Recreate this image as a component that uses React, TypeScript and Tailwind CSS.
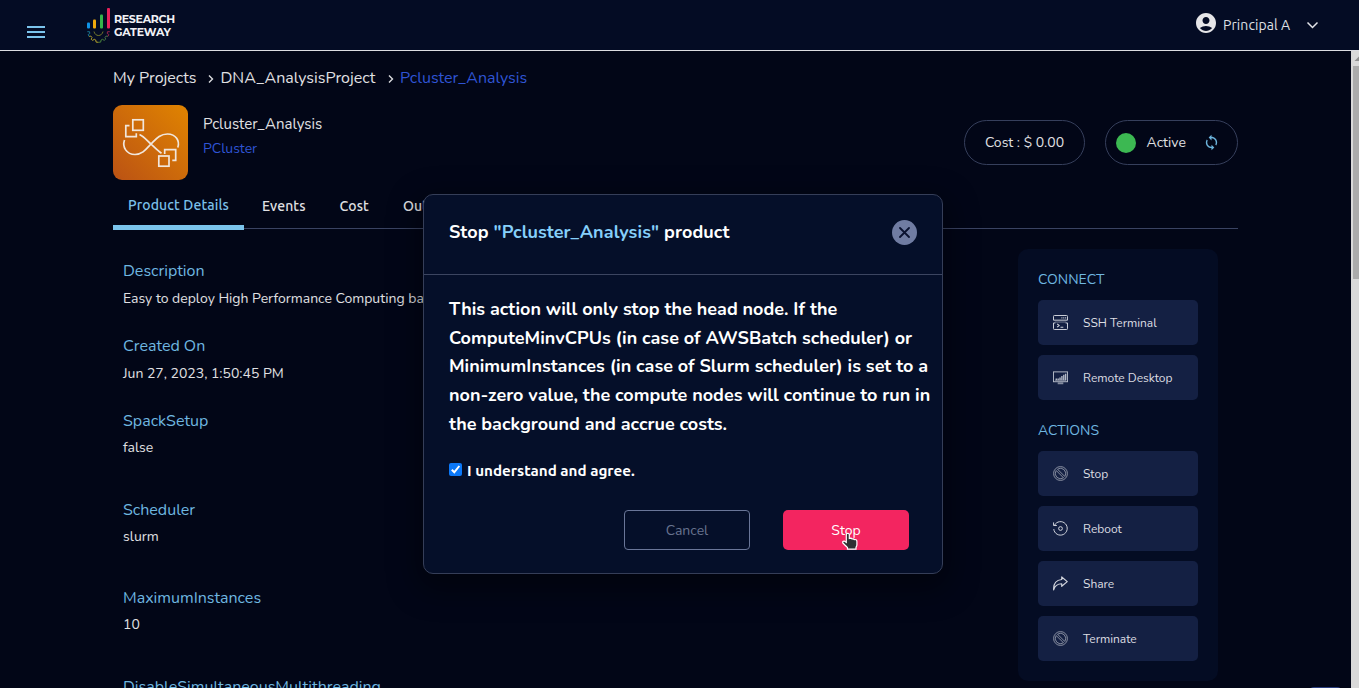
import React from 'react';
import { MdAccountCircle, MdSync } from 'react-icons/md';

const NUNITO = "font-['Nunito','Lato',sans-serif]";
const UBUNTU = "font-['Ubuntu','Noto_Sans',sans-serif]";

function Logo() {
  return (
    <div className="flex items-center">
      <svg width="26" height="36" viewBox="0 0 26 36" className="shrink-0" fill="none">
        <rect x="1" y="14.4" width="3" height="6" rx="1" fill="#0f94e8" />
        <rect x="7" y="11.6" width="3" height="8.8" rx="1" fill="#f0a90c" />
        <rect x="14" y="6.6" width="3" height="13.8" rx="1" fill="#35b44a" />
        <rect x="21" y="0" width="3" height="20.4" rx="1" fill="#e8205a" />
        <path d="M8 23.5c.6 2.600 2.400 4 4.500 4s3.900-1.400 4.500-4" stroke="#8b8f2c" strokeWidth=".8" />
        <path d="M1.300 23.700h2.200l.3 1.800-1.600 1 .8 1.900" stroke="#1c7f9c" strokeWidth=".9" />
        <path d="M3 28.400l2-.3 1 1.300-.8 1.900 1.500 1.100" stroke="#a99a2a" strokeWidth=".9" />
        <path d="M6.700 32.400l1.600-1.100 1.500.8.3 2 2.400.2" stroke="#c9b32c" strokeWidth=".9" />
        <path d="M12.500 34.300l2.200-.2.3-2 1.500-.8 1.700 1.100" stroke="#4e8d3c" strokeWidth=".9" />
        <path d="M18.200 32.400l1.500-1.200-.7-1.800 1-1.300 2 .2" stroke="#4f7a4a" strokeWidth=".9" />
        <path d="M22 28.300l.8-1.800-1.600-1.100.3-1.700h2.300" stroke="#a8254f" strokeWidth=".9" />
      </svg>
      <div className="ml-0.5 text-[11px] leading-[13px] font-bold text-[#f0f1f5] font-['Montserrat','Lato',sans-serif]">
        <div className="tracking-[-0.3px]">RESEARCH</div>
        <div className="tracking-[-0.2px]">GATEWAY</div>
      </div>
    </div>
  );
}

function Header() {
  return (
    <header className="flex h-[51px] shrink-0 justify-between border-b border-[#dcdde2] bg-[#040c24]">
      <div className="flex pl-[27px]">
        <button className="mt-[26px] flex h-3 w-[18px] flex-col justify-between" aria-label="Menu">
          <span className="h-0.5 w-full bg-[#7bc4ec]" />
          <span className="h-0.5 w-full bg-[#7bc4ec]" />
          <span className="h-0.5 w-full bg-[#7bc4ec]" />
        </button>
        <div className="mt-2 ml-[41px] h-9">
          <Logo />
        </div>
      </div>
      <div className="flex h-[46px] items-center pr-10">
        <MdAccountCircle className="size-6 text-[#e6e6e8]" />
        <span className={`ml-[5px] mt-1 w-[67px] whitespace-nowrap text-[14px] tracking-[0.08px] text-[#dfe0e4] ${UBUNTU}`}>
          Principal A
        </span>
        <svg width="13" height="9" viewBox="0 0 13 9" className="ml-4 mt-[5px]" fill="none">
          <path d="M1.500 1.500l5 5 5-5" stroke="#e3e4e8" strokeWidth="1.500" />
        </svg>
      </div>
    </header>
  );
}

function Crumb({ className }: { className: string }) {
  return (
    <svg width="6" height="9" viewBox="0 0 6 9" className={className} fill="none">
      <path d="M1 .5l3.500 3.500L1 7.500" stroke="#dcdde0" strokeWidth="1.400" />
    </svg>
  );
}

function ProductIcon() {
  return (
    <svg width="75" height="75" viewBox="0 0 75 75" className="shrink-0 rounded-[9px]" fill="none">
      <defs>
        <linearGradient id="tile" x1="0" y1="75" x2="75" y2="0" gradientUnits="userSpaceOnUse">
          <stop stopColor="#bb5214" />
          <stop offset="1" stopColor="#e08400" />
        </linearGradient>
      </defs>
      <rect width="75" height="75" fill="url(#tile)" />
      <g stroke="#f1e6dc" strokeWidth="1.700">
        <rect x="19.800" y="14.800" width="10.500" height="10.500" />
        <path d="M16.500 20.700h-3.700v11h10.500v-3.400" />
        <path d="M11.500 35C9 42 13.500 49.500 22 49.500c8 0 12-6.500 16-10.500 5-5 9-10 16.500-10 8.500 0 12.500 7 10.300 13.500" />
        <path d="M26.500 29.500C31 31.500 34 35.500 38 39c3.500 3.300 6.500 6.500 10.500 9.300" />
        <rect x="45.800" y="51" width="10.200" height="10.200" />
        <path d="M51.700 49v-4.300h11v10.600h-3.400" />
      </g>
    </svg>
  );
}

const fields = [
  { label: 'Description', value: 'Easy to deploy High Performance Computing based', box: 'h-[75px]', gap: 'mt-[3px]' },
  { label: 'Created On', value: 'Jun 27, 2023, 1:50:45 PM', box: 'h-[75px]', gap: 'mt-[3px]' },
  { label: 'SpackSetup', value: 'false', box: 'h-[89px]', gap: 'mt-[2px]' },
  { label: 'Scheduler', value: 'slurm', box: 'h-[88px]', gap: 'mt-[2px]' },
  { label: 'MaximumInstances', value: '10', box: 'h-[89px]', gap: 'mt-[2px]' },
];

const iconProps = { width: 15, height: 15, viewBox: '0 0 16 16', fill: 'none', stroke: '#d3d6de', strokeWidth: 1.05, className: 'shrink-0' };

const TerminalIcon = () => (
  <svg {...iconProps}>
    <path d="M.5 5.500v-4a1 1 0 0 1 1-1h13a1 1 0 0 1 1 1v4z" />
    <path d="M9 3h1M11 3h1M13 3h1" strokeWidth="1.200" />
    <path d="M2 7.500h12" opacity=".5" />
    <path d="M.5 8.500v6a1 1 0 0 0 1 1h13a1 1 0 0 0 1-1v-6M.5 8.500h2M13.500 8.500h2" />
    <path d="M4.500 9.500l2 1.700-2 1.700M8 13h3" strokeWidth="1.200" />
  </svg>
);
const DesktopIcon = () => (
  <svg {...iconProps} stroke="#b4b9c6">
    <rect x=".5" y="2" width="15" height="10.500" />
    <path d="M3.500 9v2M5.500 9v2M7.500 8v3M9.500 6.500V11M11.500 5v6M13.500 4v7" strokeWidth="1.500" />
    <path d="M2 11h12" opacity=".6" />
    <path d="M5 14.200h6" strokeWidth="2" opacity=".7" />
  </svg>
);
const BanIcon = () => (
  <svg {...iconProps} stroke="#9399aa" strokeWidth=".95">
    <circle cx="8" cy="8" r="7.400" />
    <path d="M4.800 3.400a5.600 5.600 0 0 1 7.800 7.800zM3.400 4.800a5.600 5.600 0 0 0 7.800 7.800z" />
  </svg>
);
const RebootIcon = () => (
  <svg {...iconProps}>
    <path d="M1.600 4.500A7.200 7.200 0 1 1 .8 8.600" />
    <path d="M.6 1.500v3.300h3.500" />
    <circle cx="8" cy="8" r="2" />
  </svg>
);
const ShareIcon = () => (
  <svg {...iconProps} strokeWidth={1.25} strokeLinejoin="round">
    <path d="M9.300 1l5.900 5-5.900 5V8.300C5 8.300 2 9.800.7 14.800.3 8.500 3.500 4.300 9.300 3.700z" />
  </svg>
);

function SideButton({ icon, label }: { icon: React.ReactNode; label: string }) {
  return (
    <button className="flex h-[45px] w-full items-center rounded-[5px] bg-[#142043] pl-[15px] text-left">
      {icon}
      <span className="ml-[15px] text-[12px] leading-4 text-[#dcdde2]">{label}</span>
    </button>
  );
}

function Sidebar() {
  return (
    <aside className="mt-5 h-[432px] w-[200px] shrink-0 rounded-[10px] bg-[#040c23] px-5">
      <h3 className="flex h-[51px] items-center pt-[9px] text-[14px] text-[#6fb7e0]">CONNECT</h3>
      <div className="flex flex-col gap-2.5">
        <SideButton icon={<TerminalIcon />} label="SSH Terminal" />
        <SideButton icon={<DesktopIcon />} label="Remote Desktop" />
      </div>
      <h3 className="flex h-[51px] items-center pt-[9px] text-[14px] text-[#6fb7e0]">ACTIONS</h3>
      <div className="flex flex-col gap-2.5">
        <SideButton icon={<BanIcon />} label="Stop" />
        <SideButton icon={<RebootIcon />} label="Reboot" />
        <SideButton icon={<ShareIcon />} label="Share" />
        <SideButton icon={<BanIcon />} label="Terminate" />
      </div>
    </aside>
  );
}

function Dialog() {
  return (
    <div className={`absolute left-[423px] top-[194px] flex h-[380px] w-[520px] flex-col rounded-[10px] border border-[#353e58] bg-[#050f29] text-white shadow-[0_10px_30px_6px_rgba(0,0,0,0.4)] ${NUNITO}`}>
      <div className="flex h-[80px] shrink-0 justify-between border-b border-[#3c4560] pl-[25px] pr-[25px]">
        <h2 className="mt-[25px] text-[18px] leading-6 font-bold tracking-[0.08px]">
          Stop <span className="text-[#86cffa]">"Pcluster_Analysis"</span> product
        </h2>
        <button className="mt-[25px] flex size-[25px] items-center justify-center rounded-full bg-[#707ca2]" aria-label="Close">
          <svg width="11" height="11" viewBox="0 0 11 11">
            <path d="M1 1l9 9M10 1l-9 9" stroke="#0a1230" strokeWidth="1.800" strokeLinecap="round" />
          </svg>
        </button>
      </div>
      <p className="mt-[19.800px] pl-[25px] pr-2 text-[18px] leading-[28.800px] font-bold">
        This action will only stop the head node. If the ComputeMinvCPUs (in case of AWSBatch scheduler) or
        MinimumInstances (in case of Slurm scheduler) is set to a non-zero value, the compute nodes will continue to run in
        the background and accrue costs.
      </p>
      <label className="mt-[21.800px] flex h-5 items-center pl-[25px]">
        <span className="mb-0.5 flex size-[13px] items-center justify-center rounded-[2px] bg-[#0b78f8]">
          <svg width="11" height="11" viewBox="0 0 11 11" fill="none">
            <path d="M1.800 5.800l2.500 2.500 5-6.300" stroke="#fff" strokeWidth="2" />
          </svg>
        </span>
        <span className={`ml-[5px] text-[15.200px] leading-5 font-bold ${UBUNTU}`}>I understand and agree.</span>
      </label>
      <div className="mt-[29px] flex justify-end gap-[33px] pr-[33px] text-[14px]">
        <button className="h-10 w-[126px] rounded-[4px] border border-[#6a7698] pt-0.5 text-[#68738f]">Cancel</button>
        <button className="h-10 w-[126px] rounded-[5px] bg-[#f32560] pt-0.5 text-white">Stop</button>
      </div>
    </div>
  );
}

function Pointer() {
  return (
    <svg width="18" height="19" viewBox="0 0 18 19" className="absolute left-[841px] top-[532px]">
      <path
        d="M6 1.500c1-.5 2.300 0 2.300 1.300v3.700l1.200-.3c.8 0 1.300.3 1.600.8.900-.4 1.800-.1 2.200.6 1.300-.3 2.600.3 2.600 1.800v3.600c0 1-.5 1.600-.9 2.300v1.900H6.500v-1.500C5 14 3.200 12.500 1.800 11c-.6-1.200.4-2.200 1.500-1.900l2 1.300V2.700c0-.5.200-.9.700-1.200z"
        fill="#2f3033"
        stroke="#fff"
        strokeWidth="1.200"
      />
    </svg>
  );
}

export default function App() {
  return (
    <div className={`relative flex h-[688px] w-[1359px] flex-col overflow-hidden bg-[#020617] ${NUNITO}`}>
      <Header />
      <div className="flex min-h-0 flex-1">
        <main className="min-w-0 flex-1 overflow-hidden pl-[113px] pr-[113px] text-[#e0e0e3]">
          <nav className="mt-[13px] flex h-7 items-center text-[16px] whitespace-nowrap">
            <span className="w-[83px]">My Projects</span>
            <Crumb className="ml-3 mt-0.5" />
            <span className="ml-[6.500px] w-[156px]">DNA_AnalysisProject</span>
            <Crumb className="ml-[11px] mt-0.5" />
            <span className="ml-[6.500px] text-[#2f54d4]">Pcluster_Analysis</span>
          </nav>
          <section className="mt-[13px] flex h-[75px]">
            <ProductIcon />
            <div className="ml-[15px] flex-1">
              <h1 className="mt-2 text-[15px] leading-[22px]">Pcluster_Analysis</h1>
              <p className="mt-1 text-[14px] leading-[20px] text-[#2f54d4]">PCluster</p>
            </div>
            <div className="mt-[15px] mr-5 flex h-[45px] w-[121px] items-center justify-center rounded-full border border-[#363f5c] text-[14px]">
              Cost : $ 0.00
            </div>
            <div className="mt-[15px] flex h-[45px] w-[133px] items-center rounded-full border border-[#363f5c] pl-2.5 text-[14px]">
              <span className="mt-px size-5 rounded-full bg-[#3cb852]" />
              <span className="ml-[10.500px] w-[39px]">Active</span>
              <MdSync className="-mt-px ml-[17.500px] size-[17px] text-[#6cb4dd]" />
            </div>
          </section>
          <div className={`flex h-[49px] border-b border-[#3a4362] text-[14px] font-medium ${UBUNTU}`}>
            <div className="flex h-[50px] w-[131px] shrink-0 justify-center border-b-[5px] border-[#7bc4ec] pt-[15px] leading-5 tracking-[0.12px] text-[#7bc0ea]">
              Product Details
            </div>
            <div className="ml-[18px] mt-4 w-[44px] leading-5 tracking-[0.1px]">Events</div>
            <div className="ml-[33.500px] mt-4 w-[30px] leading-5 tracking-[0.1px]">Cost</div>
            <div className="ml-[33.500px] mt-4 leading-5">Outputs</div>
          </div>
          <div className="flex justify-between pr-5">
            <dl className="w-[480px] pl-2.5 pt-[30px] whitespace-nowrap">
              {fields.map((f) => (
                <div key={f.label} className={f.box}>
                  <dt className="text-[16px] leading-6 text-[#6fb7e0]">{f.label}</dt>
                  <dd className={`text-[14px] leading-[26px] ${f.gap}`}>{f.value}</dd>
                </div>
              ))}
              <dt className="text-[16px] leading-6 text-[#6fb7e0]">DisableSimultaneousMultithreading</dt>
            </dl>
            <Sidebar />
          </div>
        </main>
        <div className="flex w-2 shrink-0 flex-col items-end bg-[#d9d9d9]">
          <svg width="6" height="15" viewBox="0 0 6 15">
            <path d="M1.500 10h4.500V5.500z" fill="#8f8f8f" />
          </svg>
          <div className="h-[213px] w-1.5 bg-[#ababab]" />
        </div>
      </div>
      <div className="absolute left-[1308px] top-[687px] h-9 w-[35px] rounded-t-md bg-[#2b3f80]" />
      <Dialog />
      <Pointer />
    </div>
  );
}
